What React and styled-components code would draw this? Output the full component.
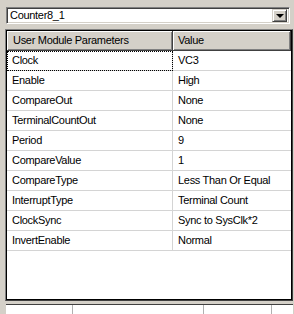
import styled, { createGlobalStyle } from 'styled-components';

const GlobalStyle = createGlobalStyle`
  html, body {
    margin: 0;
    padding: 0;
    background: #d4d0c8;
    overflow: hidden;
  }
  body {
    font-family: 'Liberation Sans', Arial, sans-serif;
    font-size: 11px;
    letter-spacing: -0.3px;
    color: #000;
  }
`;

const Page = styled.div`
  width: 294px;
  height: 314px;
  box-sizing: border-box;
  padding: 7px 1px 0 5px;
  display: flex;
  flex-direction: column;
  background: #d4d0c8;
`;

const Combo = styled.div`
  margin: 0 3px 0 1px;
  height: 17px;
  box-sizing: border-box;
  display: flex;
  align-items: center;
  background: #fff;
  border-top: 1px solid #808080;
  border-left: 1px solid #808080;
  border-right: 1px solid #fff;
  border-bottom: 1px solid #fff;
  box-shadow: inset 1px 1px 0 #404040, inset -1px -1px 0 #d4d0c8;
`;

const ComboText = styled.span`
  flex: 1;
  padding-left: 3px;
  line-height: 13px;
`;

const DropButton = styled.div`
  width: 15px;
  height: 13px;
  margin-right: 2px;
  box-sizing: border-box;
  background: #d4d0c8;
  border-top: 1px solid #d4d0c8;
  border-left: 1px solid #d4d0c8;
  border-right: 1px solid #404040;
  border-bottom: 1px solid #404040;
  box-shadow: inset 1px 1px 0 #fff, inset -1px -1px 0 #808080;
  display: flex;
  align-items: center;
  justify-content: center;
`;

const Arrow = styled.div`
  width: 0;
  height: 0;
  border-left: 4px solid transparent;
  border-right: 4px solid transparent;
  border-top: 4px solid #000;
  margin-top: 1px;
`;

const Grid = styled.div`
  margin-top: 5px;
  height: 279px;
  box-sizing: border-box;
  background: #fff;
  border-top: 1px solid #808080;
  border-left: 1px solid #808080;
  border-right: 1px solid #404040;
  border-bottom: 1px solid #404040;
  box-shadow: inset 1px 1px 0 #000, inset -1px -1px 0 #000;
  padding: 1px;
  display: flex;
  flex-direction: column;
  overflow: hidden;
`;

const Row = styled.div`
  display: grid;
  grid-template-columns: 166px 1fr;
  height: 20px;
  box-sizing: border-box;
`;

const HeadCell = styled.div`
  box-sizing: border-box;
  background: #d4d0c8;
  border-right: 1px solid #404040;
  border-bottom: 1px solid #404040;
  box-shadow: inset 1px 1px 0 #fff, inset -1px -1px 0 #808080;
  padding-left: ${(p) => p.$pad}px;
  display: flex;
  align-items: center;
`;

const Cell = styled.div`
  box-sizing: border-box;
  border-bottom: 1px solid #d4d4d4;
  border-right: ${(p) => (p.$first ? '1px solid #d4d4d4' : 'none')};
  padding-left: ${(p) => p.$pad}px;
  display: flex;
  align-items: center;
  white-space: nowrap;
  ${(p) => p.$focus && 'outline: 1px dotted #000; outline-offset: -1px;'}
`;

const Footer = styled.div`
  margin-top: 3px;
  margin-left: 1px;
  height: 10px;
  flex-shrink: 0;
  box-sizing: border-box;
  border-top: 1px solid #404040;
  display: grid;
  grid-template-columns: 67px 131px 68px 1fr;
  background: #fff;
`;

const FooterCell = styled.div`
  border-right: 1px solid #b0b0b0;
`;

const params = [
  ['Clock', 'VC3'],
  ['Enable', 'High'],
  ['CompareOut', 'None'],
  ['TerminalCountOut', 'None'],
  ['Period', '9'],
  ['CompareValue', '1'],
  ['CompareType', 'Less Than Or Equal'],
  ['InterruptType', 'Terminal Count'],
  ['ClockSync', 'Sync to SysClk*2'],
  ['InvertEnable', 'Normal'],
];

export default function App() {
  return (
    <>
      <GlobalStyle />
      <Page>
        <Combo>
          <ComboText>Counter8_1</ComboText>
          <DropButton>
            <Arrow />
          </DropButton>
        </Combo>
        <Grid>
          <Row>
            <HeadCell $pad={6}>User Module Parameters</HeadCell>
            <HeadCell $pad={5}>Value</HeadCell>
          </Row>
          {params.map(([name, value], i) => (
            <Row key={name}>
              <Cell $first $pad={5} $focus={i === 0}>{name}</Cell>
              <Cell $pad={5}>{value}</Cell>
            </Row>
          ))}
        </Grid>
        <Footer>
          <FooterCell />
          <FooterCell />
          <FooterCell />
          <div />
        </Footer>
      </Page>
    </>
  );
}
